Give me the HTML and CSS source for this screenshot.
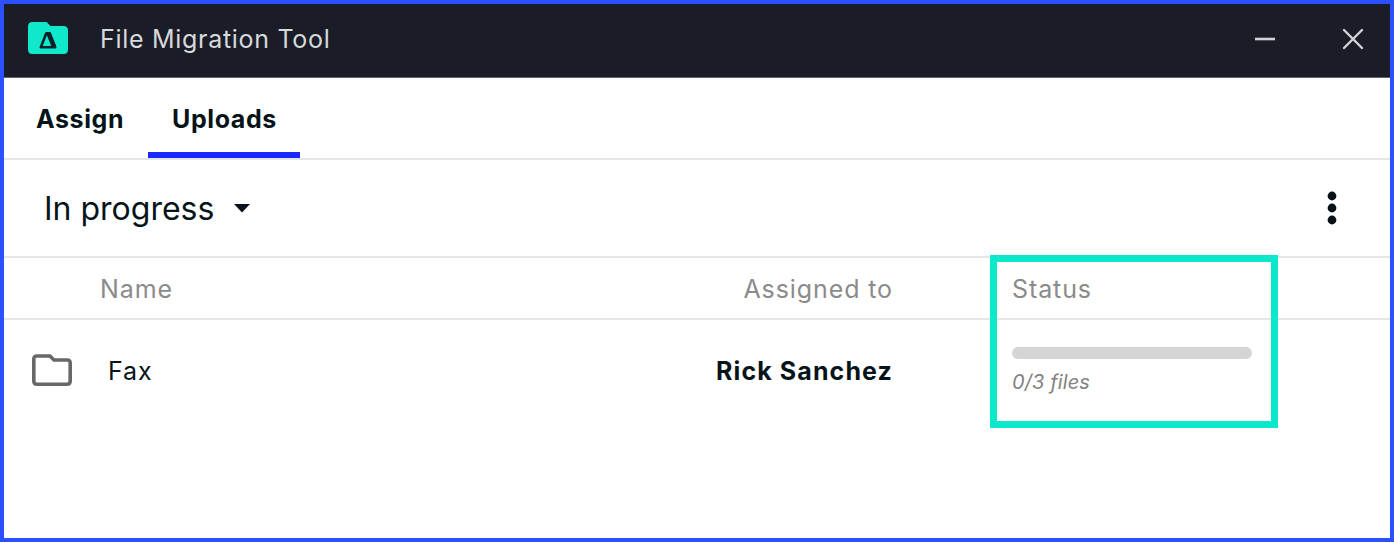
FILE: index.html
```html
<!DOCTYPE html>
<html lang="en">
<head>
<meta charset="UTF-8">
<meta name="viewport" content="width=device-width, initial-scale=1.0">
<title>File Migration Tool</title>
<link rel="stylesheet" href="styles.css">
</head>
<body>

<div class="window">
  <header class="titlebar">
    <svg class="logo" width="40" height="32" viewBox="0 0 40 32">
      <path d="M4.500 0H18.500L22.500 4H35.500Q40 4 40 8.500V27.500Q40 32 35.500 32H4.500Q0 32 0 27.500V4.500Q0 0 4.500 0Z" fill="#10e8cb"/>
      <path d="M18.300 11.200H21.700L27.200 25.200H12.800Z" fill="#10e8cb" stroke="#04222a" stroke-width="2.600" stroke-linejoin="round"/>
      <path d="M20.300 11L25.800 24.500" stroke="#04222a" stroke-width="4.400"/>
    </svg>
    <h1>File Migration Tool</h1>
    <button class="minimize" title="Minimize">
      <svg width="22" height="22" viewBox="0 0 22 22"><path d="M1 11H21" stroke="#d2d3d5" stroke-width="2.600"/></svg>
    </button>
    <button title="Close">
      <svg width="22" height="22" viewBox="0 0 22 22"><path d="M2 2L20 20M20 2L2 20" stroke="#d2d3d5" stroke-width="2.400" stroke-linecap="round"/></svg>
    </button>
  </header>

  <nav class="tabs">
    <a class="tab assign">Assign</a>
    <a class="tab uploads active">Uploads</a>
  </nav>

  <div class="toolbar">
    <div class="filter">
      <span>In progress</span>
      <svg width="16" height="9" viewBox="0 0 16 9"><path d="M0 0H16L8 8.500Z" fill="#06141a"/></svg>
    </div>
    <svg class="more" width="10" height="34" viewBox="0 0 10 34" fill="#06141a">
      <circle cx="5" cy="5" r="4.400"/>
      <circle cx="5" cy="17" r="4.400"/>
      <circle cx="5" cy="29" r="4.400"/>
    </svg>
  </div>

  <div class="row head">
    <div class="name">Name</div>
    <div class="assigned">Assigned to</div>
    <div class="status">Status</div>
  </div>

  <div class="row">
    <svg class="folder" width="40" height="32" viewBox="0 0 40 32">
      <path d="M5 2H18L22 6H35Q38.200 6 38.200 9V27Q38.200 30.200 35 30.200H5Q1.800 30.200 1.800 27V5Q1.800 2 5 2Z" fill="none" stroke="#686868" stroke-width="3.600"/>
    </svg>
    <div class="name">Fax</div>
    <div class="assigned">Rick Sanchez</div>
    <div class="status">
      <div class="progress"></div>
      <div class="count">0/3 files</div>
    </div>
  </div>

  <div class="highlight"></div>
</div>

</body>
</html>
```

FILE: styles.css
```css
* { box-sizing: border-box; }
body { margin: 0; background: #fff; color: #06141a; font-family: Inter, "Liberation Sans", sans-serif; font-size: 25px; }
.window { position: relative; height: 542px; border: 4px solid #2b50ff; overflow: hidden; }

.titlebar { display: flex; align-items: center; height: 74px; padding: 0 26px 4px 24px; background: #1a1d28; border-bottom: 1px solid #63656c; }
.logo { margin-bottom: 2px; }
h1 { flex: 1; margin: 0 0 0 32px; color: #d8d9db; font-size: 25px; font-weight: 400; letter-spacing: 0.7px; }
.titlebar button { display: flex; padding: 0; border: none; background: none; }
.minimize { margin-right: 66px; }

.tabs { display: flex; height: 82px; padding-left: 8px; border-bottom: 2px solid #e6e6e6; font-weight: 700; letter-spacing: 0.6px; }
.tab { height: 80px; padding: 0 24px; line-height: 82px; border-bottom: 6px solid transparent; }
.assign { width: 136px; }
.uploads { width: 152px; }
.active { border-color: #1929ff; }

.toolbar { display: flex; align-items: center; justify-content: space-between; height: 98px; padding: 0 53px 0 40px; border-bottom: 2px solid #e6e6e6; }
.filter { display: flex; align-items: center; gap: 20px; font-size: 32px; }

.row { display: grid; grid-template-columns: 96px 400px 393px 119px 240px; align-items: center; height: 100px; letter-spacing: 0.9px; }
.head { height: 62px; padding-top: 2px; border-bottom: 2px solid #e6e6e6; color: #8b8b8b; }
.name { grid-column: 2; }
.assigned { grid-column: 3; text-align: right; font-weight: 700; letter-spacing: 1.1px; }
.status { grid-column: 5; }
.row .folder { grid-column: 1; margin-left: 28px; }
.row:not(.head) .name { padding-left: 8px; }
.row:not(.head) .name, .row:not(.head) .assigned { padding-top: 2px; }
.head .assigned { font-weight: 400; letter-spacing: 0.9px; }

.progress { height: 12px; border-radius: 6px; background: #d5d5d5; }
.count { margin-top: 11px; color: #828282; font-size: 20px; font-style: italic; letter-spacing: 0.1px; line-height: 24px; }

/* callout frame around the status column */
.highlight { position: absolute; left: 986px; top: 251px; width: 288px; height: 173px; border: 7px solid #0ce8cb; }
```
